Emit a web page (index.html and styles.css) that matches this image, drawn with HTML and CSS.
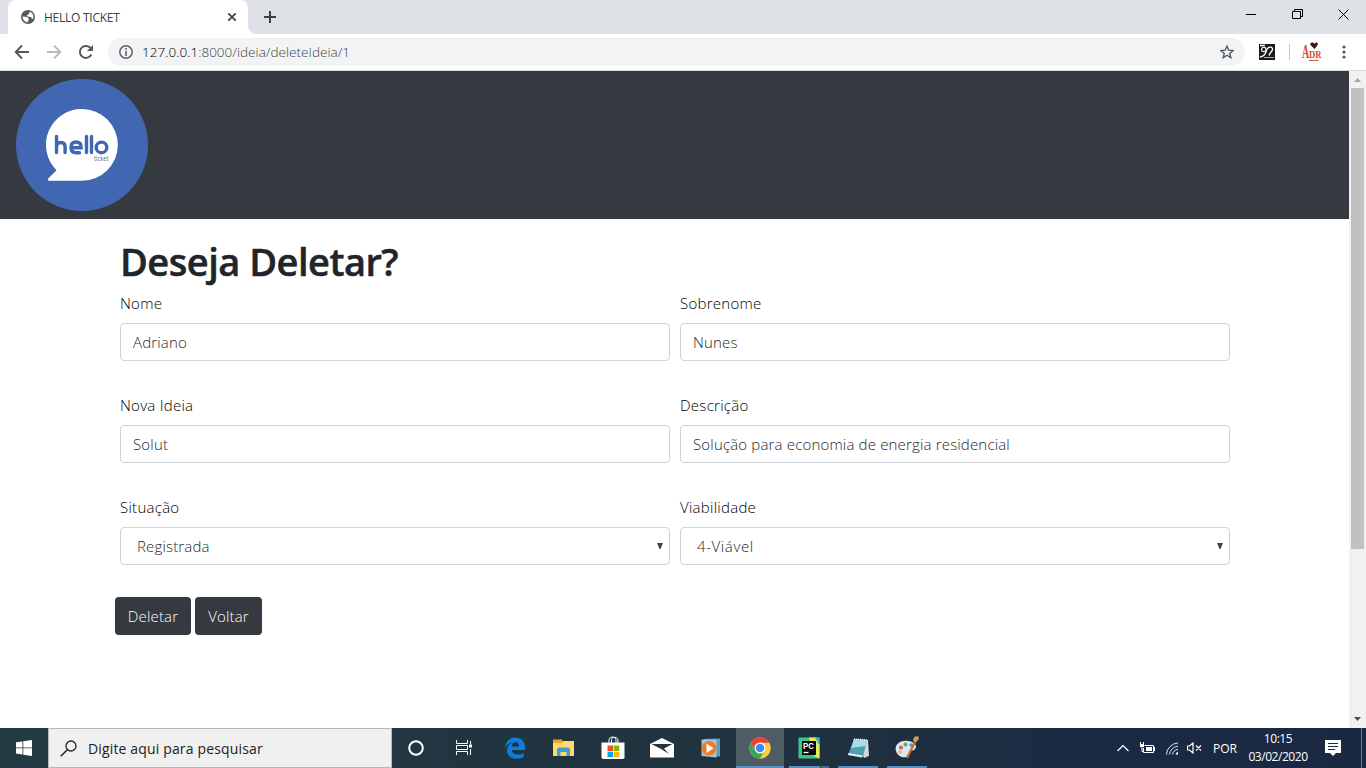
FILE: index.html
```html
<!DOCTYPE html>
<html lang="pt-BR">
<head>
<meta charset="utf-8">
<title>HELLO TICKET</title>
<link rel="stylesheet" href="styles.css">
</head>
<body>
<div class="screen">
  <header class="tabstrip">
    <div class="tab">
      <svg class="favicon" width="14" height="14" viewBox="0 0 14 14"><circle cx="7" cy="7" r="7" fill="#54585d"/><path d="M1.500 6.500 6 7l2 2-1.500 3.400C3.500 12 1.600 9.500 1.500 6.500zM6.500 1.800 8.500 2 8 4 5.500 5.500 7 6.700l3 .3 1 2 1.400-.5C13 6 12 3 9.500 1.900z" fill="#fff"/></svg>
      <span class="tab-title">HELLO TICKET</span>
      <svg class="tab-close" width="10" height="10" viewBox="0 0 10 10"><path d="m1.300 1.300 7.400 7.400m0-7.400L1.300 8.700" stroke="#3c4043" stroke-width="1.700"/></svg>
    </div>
    <div class="tab-foot"></div>
    <svg class="new-tab" width="12" height="12" viewBox="0 0 12 12"><path d="M6 0v12M0 6h12" stroke="#3c4043" stroke-width="2"/></svg>
    <div class="win-controls">
      <svg width="10" height="11" viewBox="0 0 10 11"><path d="M0 5.500h10" stroke="#000"/></svg>
      <svg width="11" height="11" viewBox="0 0 11 11"><path d="M.5 2.500h8v7h-8zM2.500 2.500v-2h8v7h-2" fill="none" stroke="#000"/></svg>
      <svg width="11" height="11" viewBox="0 0 11 11"><path d="m.5.5 10 10m0-10-10 10" stroke="#000"/></svg>
    </div>
  </header>
  <div class="toolbar">
    <svg class="nav-icon" width="16" height="16" viewBox="0 0 16 16"><path d="M15 8H2M8 1.500 1.700 8 8 14.500" fill="none" stroke="#54585d" stroke-width="1.900"/></svg>
    <svg class="nav-icon" width="16" height="16" viewBox="0 0 16 16"><path d="M1 8h13M8 1.500 14.300 8 8 14.500" fill="none" stroke="#b9bbbd" stroke-width="1.900"/></svg>
    <svg class="nav-icon" width="16" height="16" viewBox="0 0 16 16"><path d="M13.300 10.500A6 6 0 1 1 12 3.500L14 6" fill="none" stroke="#54585d" stroke-width="2"/><path d="M15 1v6H9z" fill="#54585d"/></svg>
    <div class="omnibox">
      <svg width="14" height="14" viewBox="0 0 14 14"><circle cx="7" cy="7" r="6.200" fill="none" stroke="#5f6368" stroke-width="1.500"/><path d="M7 6v5M7 3v1.700" stroke="#5f6368" stroke-width="1.600"/></svg>
      <span class="url"><span class="host">127.0.0.1</span>:8000/ideia/deleteIdeia/1</span>
      <svg class="star" width="14" height="14" viewBox="0 0 14 14"><path d="m7 1 1.700 4.200 4.500.3-3.500 2.900 1.200 4.400L7 10.300l-3.900 2.500 1.200-4.400L.8 5.500l4.500-.3z" fill="none" stroke="#54585d" stroke-width="1.300"/></svg>
    </div>
    <svg class="extension" width="16" height="16" viewBox="0 0 16 16"><rect width="16" height="16" fill="#1b1b1b"/><path d="M1 1.500h5M1 13c3-.5 5-2 6-5l1-3c2-3 6-2 5.500.5C13 8 10.500 9 10 11.500" fill="none" stroke="#fff" stroke-width="1.300"/><circle cx="4.800" cy="5.500" r="2.200" fill="#1b1b1b" stroke="#fff" stroke-width="1.100"/><path d="M5 13.500h10" stroke="#aaa"/></svg>
    <span class="divider"></span>
    <div class="avatar"><span class="adr-a">A</span><span class="adr-dr">DR</span><svg class="heart" width="8" height="7" viewBox="0 0 8 7"><path d="M4.500 7 .5 3c-1-2 2-4 4-1 2-3 4-1 3 1z" fill="#3c1010"/></svg></div>
    <svg class="menu-dots" width="4" height="14" viewBox="0 0 4 14"><g fill="#54585d"><circle cx="2" cy="2" r="1.600"/><circle cx="2" cy="7" r="1.600"/><circle cx="2" cy="12" r="1.600"/></g></svg>
  </div>

  <div class="viewport">
    <div class="page">
      <nav class="navbar">
        <svg width="132" height="132" viewBox="0 0 132 132"><circle cx="66" cy="66" r="66" fill="#4267b2"/><path d="M66 30a35.800 35.800 0 0 1 0 71.700H33q-2-.5-.5-2.500l8-8A35.800 35.800 0 0 1 66 30z" fill="#fff"/><g fill="none" stroke="#4267b2" stroke-width="3.400" stroke-linecap="round"><path d="M40.500 57.500v16M40.500 68q0-4.500 4.300-4.500t4.300 4.500v5.500M55 68.700h10.200q0-5.700-5.100-5.700T55 68.500q0 5.300 5.500 5.300h3M70.500 57.500v16M75.500 57.500v16"/><circle cx="85.500" cy="68.400" r="5.300"/></g><text x="78" y="81.500" class="logo-sub" textLength="14.500" lengthAdjust="spacingAndGlyphs">ticket</text></svg>
      </nav>
      <main class="container">
        <h1>Deseja Deletar?</h1>
        <form class="grid">
          <div class="group"><label>Nome</label><div class="control"><span>Adriano</span></div></div>
          <div class="group"><label>Sobrenome</label><div class="control"><span>Nunes</span></div></div>
          <div class="group"><label>Nova Ideia</label><div class="control"><span>Solut</span></div></div>
          <div class="group"><label>Descrição</label><div class="control"><span>Solução para economia de energia residencial</span></div></div>
          <div class="group"><label>Situação</label><div class="control select"><span>Registrada</span><svg width="6" height="7" viewBox="0 0 6 7"><path d="M0 0h6L3.500 6h-1z" fill="#444"/></svg></div></div>
          <div class="group"><label>Viabilidade</label><div class="control select"><span class="wide">4-Viável</span><svg width="6" height="7" viewBox="0 0 6 7"><path d="M0 0h6L3.500 6h-1z" fill="#444"/></svg></div></div>
        </form>
        <div class="actions"><div class="btn delete">Deletar</div><div class="btn back">Voltar</div></div>
      </main>
    </div>
    <div class="scrollbar">
      <svg width="17" height="17" viewBox="0 0 17 17"><path d="m5 11 3.500-4 3.500 4z" fill="#a3a3a3"/></svg>
      <div class="thumb"></div>
      <svg class="down" width="17" height="17" viewBox="0 0 17 17"><path d="m5 6 3.500 4L12 6z" fill="#505050"/></svg>
    </div>
  </div>

  <footer class="taskbar">
    <div class="start"><svg width="16" height="16" viewBox="0 0 16 16"><path d="m0 2.300 6.500-.9v6.100H0zM7.300 1.200 16 0v7.500H7.300zM0 8.300h6.500v6.200L0 13.600zM7.300 8.300H16V16l-8.700-1.300z" fill="#fff"/></svg></div>
    <div class="search"><svg width="17" height="17" viewBox="0 0 17 17"><circle cx="11" cy="6" r="5" fill="none" stroke="#222" stroke-width="1.300"/><path d="m7.300 9.700-6.500 6.500" stroke="#222" stroke-width="1.500"/></svg><span>Digite aqui para pesquisar</span></div>
    <div class="apps">
      <div class="app"><svg width="24" height="24" viewBox="0 0 24 24"><circle cx="12" cy="12" r="6.800" fill="none" stroke="#fff" stroke-width="2"/></svg></div>
      <div class="app task-view"><svg width="24" height="24" viewBox="0 0 24 24"><path d="M4.500 4v3.500h11V4M4.500 19v-3.500h11V19M4.500 9.500h11v4h-11zM18.500 5v3M18.500 13v6" fill="none" stroke="#fff"/><path d="M17 8.500h3v3h-3z" fill="#fff"/></svg></div>
      <div class="app"><svg width="24" height="24" viewBox="0 0 24 24"><path d="M2 12C2.800 5.500 6.500 1.500 12 1.500c6 0 10 4 10 9.800V14H8.800c.4 3.300 3 4.500 6 4.500 2.600 0 4.500-.7 6-1.600v4.200c-2 1-4.300 1.600-7 1.600C7.500 22.700 4 19 4 14.500c0-3.600 2-6.300 5.300-7.700C6 7 3.700 9 2 12zM9 10.500h7C16 7.600 14.700 6.200 12.500 6.200S9.200 8 9 10.500z" fill="#0f7bdc"/></svg></div>
      <div class="app"><svg width="24" height="24" viewBox="0 0 24 24"><path d="M1 3.500h9l1 2h11V20H1z" fill="#e7a921"/><path d="M1 7h9l1.500-2H22v15H1z" fill="#ffda6b"/><path d="M5 20v-7l1.500-1.500h10L18 13v7h-3.500v-4h-6v4z" fill="#449bd0"/></svg></div>
      <div class="app"><svg width="24" height="24" viewBox="0 0 24 24"><path d="M8 8V4c0-4 7-4 7 0v4M10.500 7V3.500c0-3 6.500-3 6.500.5v3" fill="none" stroke="#fff"/><path d="M.5 6.500h23v14.700q0 1.800-1.800 1.800H2.300Q.5 23 .5 21.200z" fill="#fff"/><path d="M6.500 9.500H12V15H6.500z" fill="#f25022"/><path d="M12.700 9.500h5.500V15h-5.500z" fill="#7fba00"/><path d="M6.500 15.700H12v5.500H6.500z" fill="#00a4ef"/><path d="M12.700 15.700h5.500v5.500h-5.500z" fill="#ffb900"/></svg></div>
      <div class="app"><svg width="24" height="24" viewBox="0 0 24 24"><path d="M0 8 12 2l12 6v13.500H0z" fill="#fff"/><path d="M1.500 8h21L14 12.500l5 5.500-7-4.500z" fill="#21343f"/></svg></div>
      <div class="app"><svg width="24" height="24" viewBox="0 0 24 24"><path d="m5 3 16-.5v18L5 20z" fill="#679bb8"/><path d="M2.500 3.500h15v18L2.500 20z" fill="#9fc7df"/><circle cx="10" cy="12.300" r="7.300" fill="#f17b24"/><path d="m7.500 7.500 7 4.800-7 4.800z" fill="#fff"/></svg></div>
      <div class="app active"><svg width="24" height="24" viewBox="0 0 24 24"><circle cx="12" cy="12" r="10.700" fill="#ffcd40"/><path d="M2.700 6.700A10.700 10.700 0 0 1 21.300 6.700H12L7.300 14.500z" fill="#ea4335"/><path d="M2.700 6.700 7.400 14.700l9.100-.1-4.600 8.100A10.700 10.700 0 0 1 2.700 6.700z" fill="#34a853"/><circle cx="12" cy="12" r="5.500" fill="#fff"/><circle cx="12" cy="12" r="4.300" fill="#4285f4"/></svg></div>
      <div class="app running split"><svg width="24" height="24" viewBox="0 0 24 24"><path d="M1.500 1.500h21v21h-21z" fill="#35c88a"/><path d="M12 1.500h7L22.500 8v14.500L17 20z" fill="#e5ed55"/><path d="M18 1.500h4.500V10z" fill="#25b9dc"/><path d="M5 5h14v14H5z" fill="#080808"/><text x="6" y="13" class="pc" textLength="11" lengthAdjust="spacingAndGlyphs">PC</text><path d="M6.500 16.500h5" stroke="#fff" stroke-width="1.300"/></svg></div>
      <div class="app running"><svg width="24" height="24" viewBox="0 0 24 24"><path d="m8 3 14 1 1 16-5 2z" fill="#d5d8d7"/><path d="m8 3 13 1-4 17-15-2z" fill="#4f9fb2"/><path d="m8 3 13 1-1.500 6L5 12z" fill="#a6dce6"/><path d="m2 19 14 2.500.5-2L2.500 17z" fill="#e8f2f3"/><path d="m8 3 13 1" stroke="#eee" stroke-width="1.500" stroke-dasharray="1 1"/></svg></div>
      <div class="app running"><svg width="24" height="24" viewBox="0 0 24 24"><path d="M1 15C-1 9 5 4 13 5c8 1 10 6 6 9-2 1-4 0-4 3 0 6-12 6-14-2z" fill="#d7e9f6"/><circle cx="6" cy="11.500" r="2" fill="#db5943"/><circle cx="10.500" cy="8.500" r="2" fill="#5eb34e"/><circle cx="16" cy="9" r="1.700" fill="#4994dc"/><circle cx="5" cy="16" r="1.800" fill="#f3bc37"/><path d="m21 4-9 18" stroke="#bd6e2d" stroke-width="2.300"/><path d="m18 5 1-4 4-1 1 3-3 3z" fill="#d49b55"/></svg></div>
    </div>
    <div class="tray">
      <svg width="12" height="8" viewBox="0 0 12 8"><path d="m.5 7 5.500-5.500L11.500 7" fill="none" stroke="#fff" stroke-width="1.200"/></svg>
      <svg class="battery" width="16" height="12" viewBox="0 0 16 12"><path d="M5.500 3.500h9v7H4.500V6" fill="none" stroke="#fff"/><path d="M7 5h6v4H7zM15 5h1v4h-1zM1 2h4v3H1z" fill="#fff"/><path d="M1.500 0v3m3-3v3M3 5v4.500h2" fill="none" stroke="#fff"/></svg>
      <svg class="wifi" width="13" height="13" viewBox="0 0 13 13"><g fill="none" stroke="#e0e4e8"><path d="M.5 12.500A12 12 0 0 1 12 1M3.500 12.500A9 9 0 0 1 12 4.300M6.500 12.500A6 6 0 0 1 12 7.500"/></g><path d="M9.500 12.500A3 3 0 0 1 12 10v2.500z" fill="#fff"/></svg>
      <svg class="sound" width="15" height="12" viewBox="0 0 15 12"><path d="M.5 4h2l3.500-3v10L2.500 8h-2zM9 3.500l5 5m0-5-5 5" fill="none" stroke="#fff" stroke-width="1.200"/></svg>
      <span class="lang">POR</span>
      <div class="clock"><span class="time">10:15</span><span class="date">03/02/2020</span></div>
      <svg class="notice" width="16" height="16" viewBox="0 0 16 16"><path d="M0 0h16v13h-5l-3 3-3-3H0z" fill="#fff"/><path d="M3 3.500h10M3 6.500h10M3 9.500h7" stroke="#1b2a41"/></svg>
      <span class="peek"></span>
    </div>
  </footer>
</div>
</body>
</html>
```
FILE: styles.css
```css
* { box-sizing: border-box; }
body { margin: 0; overflow: hidden; font-family: "Open Sans", "Noto Sans", sans-serif; }
svg { display: block; flex: none; }
span, label, h1, .btn { white-space: nowrap; }
.screen { width: 1366px; height: 768px; display: flex; flex-direction: column; background: #fff; }
.tabstrip { height: 34px; flex: none; background: #dee1e6; display: flex; align-items: center; padding-left: 8px; }
.tab { width: 240px; height: 34px; background: #fff; border-radius: 8px 8px 0 0; display: flex; align-items: center; padding: 0 11px 0 13px; }
.tab-foot { width: 8px; height: 8px; align-self: flex-end; background: radial-gradient(circle at 100% 0, #dee1e6 7.500px, #fff 8px); }
.tab-title { margin-left: 9px; font-size: 12px; color: #3c4043; letter-spacing: -.25px; }
.tab-close { margin-left: auto; }
.new-tab { margin-left: 8px; }
.win-controls { margin: 0 17px 6px auto; display: flex; gap: 35px; }
.win-controls svg:first-child { margin-right: 1px; }
.toolbar { height: 37px; flex: none; display: flex; align-items: center; padding: 0 20px 0 14px; border-bottom: 1px solid #d5dadb; }
.nav-icon { margin-right: 16px; }
.omnibox { width: 1137px; height: 28px; margin-left: -2px; background: #f1f3f4; border-radius: 14px; display: flex; align-items: center; padding: 0 11px; }
.url { margin-left: 9px; font-size: 13.5px; font-weight: 300; color: #3f4347; letter-spacing: .03px; }
.host { color: #000; }
.star { margin-left: auto; }
.extension { margin-left: 14px; }
.divider { width: 1px; height: 16px; margin-left: 14px; background: #c7c9cc; }
.avatar { position: relative; width: 20px; height: 20px; margin-left: 12px; display: flex; align-items: baseline; color: #d94b28; font-family: "Liberation Serif", serif; line-height: 20px; }
.adr-a { width: 7px; font-size: 18px; font-weight: bold; transform: scaleX(.55); transform-origin: 0 50%; }
.adr-dr { width: 12px; font-size: 11px; font-weight: bold; line-height: 11px; transform: scaleX(.78); transform-origin: 0 50%; border-bottom: 1px solid #dc5a3a; }
.heart { position: absolute; left: 8px; top: 0; }
.menu-dots { margin-left: auto; }
.viewport { height: 657px; flex: none; display: flex; }
.page { width: 1349px; }
.navbar { height: 148px; padding: 8px 16px; background: #343a40; }
.logo-sub { font: 7px "Open Sans", sans-serif; fill: #4267b2; }
.container { padding: 18px 119px 0 120px; }
h1 { height: 48px; margin: 0 0 6px; font-size: 38px; line-height: 48px; font-weight: 600; letter-spacing: -.5px; color: #212529; -webkit-text-stroke: .5px #212529; }
.grid { display: grid; grid-template-columns: 550px 550px; column-gap: 10px; }
.group { height: 102px; color: #212529; font-size: 15px; font-weight: 300; letter-spacing: .17px; }
label { display: block; height: 24px; margin-bottom: 8px; line-height: 24px; letter-spacing: .27px; color: #000; }
.control { height: 38px; display: flex; align-items: center; border: 1px solid #ced4da; border-radius: 4px; padding: 0 12px; color: #24282c; }
.control span { padding-bottom: 1px; }
.wide { letter-spacing: .6px; }
.select { padding: 0 6px 0 16px; }
.select svg { margin-left: auto; }
.actions { display: flex; gap: 4px; margin: 0 0 0 -5px; }
.btn { height: 38px; border-radius: 4px; background: #343a40; color: #fff; display: flex; align-items: center; justify-content: center; font-size: 15px; font-weight: 300; letter-spacing: .15px; }
.delete { width: 76px; }
.back { width: 67px; }
.scrollbar { width: 17px; background: #f1f1f1; display: flex; flex-direction: column; }
.thumb { width: 13px; height: 461px; margin-left: 2px; background: #c1c1c1; }
.down { margin-top: auto; }
.taskbar { height: 40px; flex: none; display: flex; background: linear-gradient(90deg, #223b43, #20323e 55%, #1b2a43 80%, #1a2842); color: #fff; }
.start { width: 48px; display: flex; align-items: center; justify-content: center; }
.search { width: 344px; border: 1px solid #b8b8b8; background: #f0f0f0; color: #222; display: flex; align-items: center; padding-left: 11px; }
.search span { margin-left: 11px; font-size: 14px; letter-spacing: .15px; }
.apps { display: flex; gap: 1px; }
.app { width: 48px; height: 40px; display: flex; align-items: center; justify-content: center; }
.task-view { width: 49px; padding-right: 3px; }
.active { background: #4d5c65; border-bottom: 2px solid #5690c2; padding-top: 2px; }
.running { background: linear-gradient(#5690c2, #5690c2) 50% 100% / 40px 2px no-repeat; }
.split { background: linear-gradient(90deg, #5690c2 31px, #20323e 31px 32px, #416f94 32px) 50% 100% / 40px 2px no-repeat; }
.pc { font: bold 9px "Liberation Sans", sans-serif; fill: #fff; }
.tray { margin-left: auto; display: flex; align-items: center; }
.battery { margin-left: 10px; }
.wifi { margin-left: 11px; }
.sound { margin-left: 8px; }
.lang { margin-left: 11px; font-size: 12px; }
.clock { width: 60px; margin-left: 11px; display: flex; flex-direction: column; align-items: center; font-size: 12px; line-height: 18px; letter-spacing: -.45px; }
.notice { margin-left: 17px; }
.peek { width: 1px; height: 40px; margin: 0 4px 0 20px; background: #6e7887; }
```
